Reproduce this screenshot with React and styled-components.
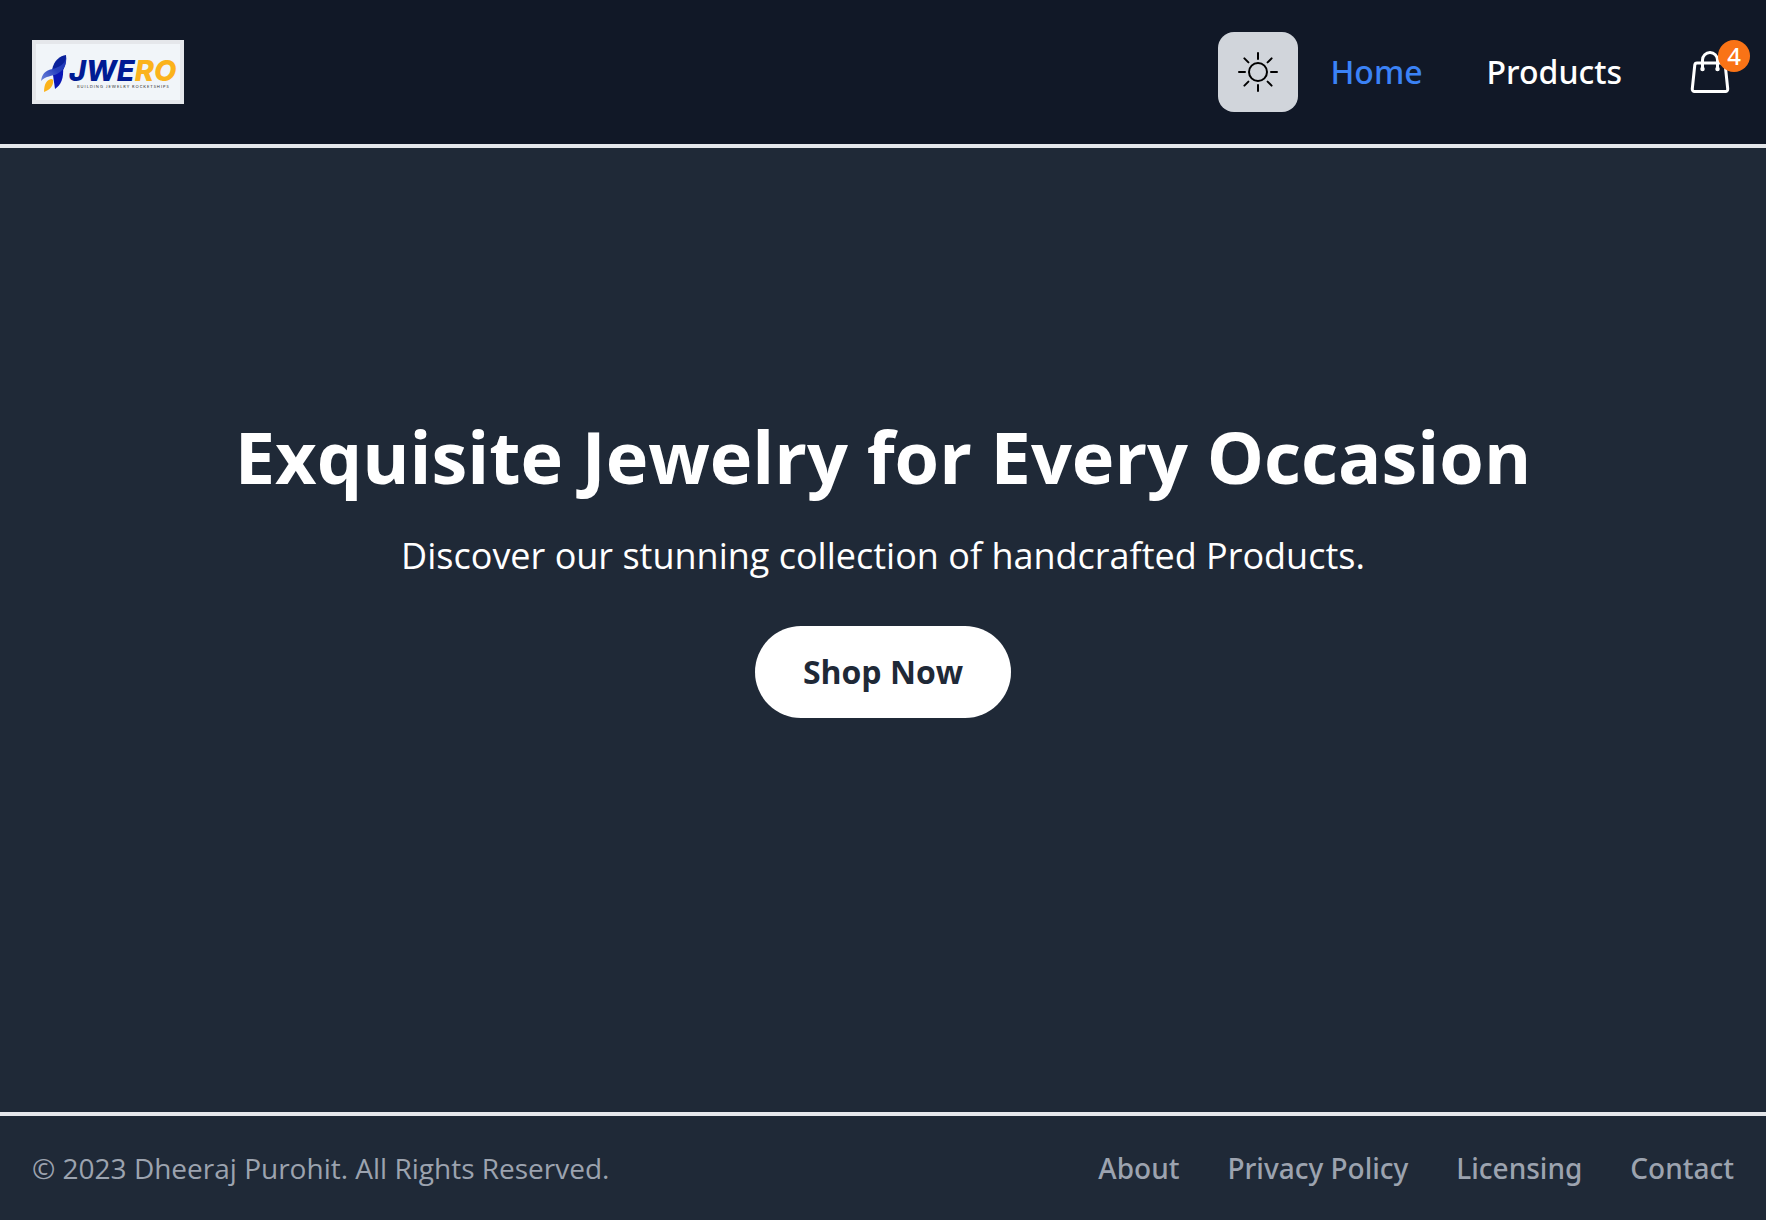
import React from "react";
import styled, { createGlobalStyle } from "styled-components";

const mediumFont = '"Noto Sans", "Open Sans", sans-serif';

const GlobalStyle = createGlobalStyle`
  *, *::before, *::after { box-sizing: border-box; }
  body {
    margin: 0;
    background: #1f2937;
    color: #ffffff;
    font-family: "Open Sans", "Noto Sans", sans-serif;
  }
  h1, p, ul { margin: 0; padding: 0; }
  ul { list-style: none; }
`;

const Page = styled.div`
  min-height: 100vh;
  display: flex;
  flex-direction: column;
`;

const Header = styled.header`
  display: flex;
  align-items: center;
  justify-content: space-between;
  padding: 32px;
  background: #111827;
  border-bottom: 4px solid #e5e7eb;
`;

const LogoLink = styled.a`
  display: block;
  border: 4px solid #e5e7eb;
  background: #f1f5f9;
  svg { display: block; width: 144px; height: 56px; }
`;

const Nav = styled.nav`
  display: flex;
  align-items: center;
  gap: 32px;
`;

const ThemeButton = styled.button`
  display: grid;
  place-items: center;
  width: 80px;
  height: 80px;
  padding: 0;
  border: 0;
  border-radius: 16px;
  background: #d1d5db;
  color: #000000;
  cursor: pointer;
`;

const NavList = styled.ul`
  display: flex;
  align-items: center;
  gap: 64px;
`;

const NavLink = styled.a`
  display: block;
  font-family: ${mediumFont};
  font-size: 32px;
  line-height: 48px;
  font-weight: 500;
  text-decoration: none;
  color: ${(p) => (p.$active ? "#3b82f6" : "#ffffff")};
`;

const CartLink = styled.a`
  position: relative;
  display: block;
  color: #ffffff;
  svg { display: block; }
`;

const Badge = styled.span`
  position: absolute;
  top: -8px;
  right: -16px;
  width: 32px;
  height: 32px;
  border-radius: 50%;
  background: #f97316;
  font-family: ${mediumFont};
  font-size: 24px;
  line-height: 32px;
  font-weight: 500;
  text-align: center;
`;

const Hero = styled.main`
  flex: 1;
  display: flex;
  flex-direction: column;
  align-items: center;
  justify-content: center;
  padding: 32px 32px 158px;
  text-align: center;
`;

const Title = styled.h1`
  font-size: 72px;
  line-height: 80px;
  font-weight: 700;
`;

const Subtitle = styled.p`
  margin-top: 32px;
  font-size: 36px;
  line-height: 56px;
`;

const ShopButton = styled.button`
  margin-top: 42px;
  padding: 24px 48px;
  border: 0;
  border-radius: 46px;
  background: #ffffff;
  color: #1f2937;
  font-family: inherit;
  font-size: 32px;
  line-height: 44px;
  font-weight: 700;
  cursor: pointer;
`;

const Footer = styled.footer`
  display: flex;
  align-items: center;
  justify-content: space-between;
  padding: 32px;
  border-top: 4px solid #e5e7eb;
  font-size: 28px;
  line-height: 40px;
  color: #9ca3af;
`;

const FooterList = styled.ul`
  display: flex;
  gap: 48px;
  font-family: ${mediumFont};
  font-weight: 500;
`;

const FooterLink = styled.a`
  color: inherit;
  text-decoration: none;
`;

const Logo = () => (
  <svg viewBox="0 0 144 56" role="img" aria-label="Jwero, building jewelry rocketships">
    <defs>
      <linearGradient id="wing" x1="0" y1="1" x2="1" y2="0">
        <stop offset="0" stopColor="#6f86da" />
        <stop offset="0.5" stopColor="#2a43c0" />
        <stop offset="1" stopColor="#1d35b4" />
      </linearGradient>
    </defs>
    <path d="M30 11C24 12 18 16 16 26L20 33C27 29 31 21 30 11Z" fill="#0a219b" />
    <path d="M27 23L17 31L19 45C25 41 28 34 27 23Z" fill="#0b16b5" />
    <path d="M30 12C30 22 20 24 13 26C8 28 6 31 5 37C10 32 16 32 21 30C29 26 31 19 30 12Z" fill="url(#wing)" />
    <path d="M16 35C11 35 8 40 8 48C14 46 18 41 17 36Z" fill="#fbb31c" />
    <text x="33" y="37" fontFamily="Inter, sans-serif" fontSize="29" fontWeight="800" fontStyle="italic" fill="#001b94">
      JWE<tspan fill="#fbb31c">RO</tspan>
    </text>
    <text x="41" y="44" fontFamily="Lato, sans-serif" fontSize="4" letterSpacing="1" fill="#333333">
      BUILDING JEWELRY ROCKETSHIPS
    </text>
  </svg>
);

const SunIcon = () => (
  <svg width="48" height="48" viewBox="0 0 48 48" fill="none" stroke="currentColor" strokeWidth="2" strokeLinecap="round" aria-hidden="true">
    <circle cx="24" cy="24" r="9" />
    <path d="M24 5v6M24 37v6M5 24h6M37 24h6M10.4 10.4l4 4M33.6 33.6l4 4M10.4 37.6l4-4M33.6 14.4l4-4" />
  </svg>
);

const BagIcon = () => (
  <svg width="48" height="48" viewBox="0 0 24 24" fill="none" stroke="currentColor" strokeWidth="1.5" strokeLinecap="round" strokeLinejoin="round" aria-hidden="true">
    <path d="M15.75 10.5V6a3.75 3.75 0 1 0-7.5 0v4.5m11.356-1.993 1.263 12c.07.665-.45 1.243-1.119 1.243H4.25a1.125 1.125 0 0 1-1.12-1.243l1.264-12A1.125 1.125 0 0 1 5.513 7.5h12.974c.576 0 1.059.435 1.119 1.007ZM8.625 10.5a.375.375 0 1 1-.75 0 .375.375 0 0 1 .75 0Zm7.5 0a.375.375 0 1 1-.75 0 .375.375 0 0 1 .75 0Z" />
  </svg>
);

export default function App() {
  return (
    <>
      <GlobalStyle />
      <Page>
        <Header>
          <LogoLink href="#home"><Logo /></LogoLink>
          <Nav>
            <ThemeButton type="button" aria-label="Toggle theme"><SunIcon /></ThemeButton>
            <NavList>
              <li><NavLink href="#home" $active>Home</NavLink></li>
              <li><NavLink href="#products">Products</NavLink></li>
              <li>
                <CartLink href="#cart" aria-label="Cart, 4 items">
                  <BagIcon />
                  <Badge>4</Badge>
                </CartLink>
              </li>
            </NavList>
          </Nav>
        </Header>
        <Hero>
          <Title>Exquisite Jewelry for Every Occasion</Title>
          <Subtitle>Discover our stunning collection of handcrafted Products.</Subtitle>
          <ShopButton type="button">Shop Now</ShopButton>
        </Hero>
        <Footer>
          <span>© 2023 Dheeraj Purohit. All Rights Reserved.</span>
          <FooterList>
            <li><FooterLink href="#about">About</FooterLink></li>
            <li><FooterLink href="#privacy">Privacy Policy</FooterLink></li>
            <li><FooterLink href="#licensing">Licensing</FooterLink></li>
            <li><FooterLink href="#contact">Contact</FooterLink></li>
          </FooterList>
        </Footer>
      </Page>
    </>
  );
}
